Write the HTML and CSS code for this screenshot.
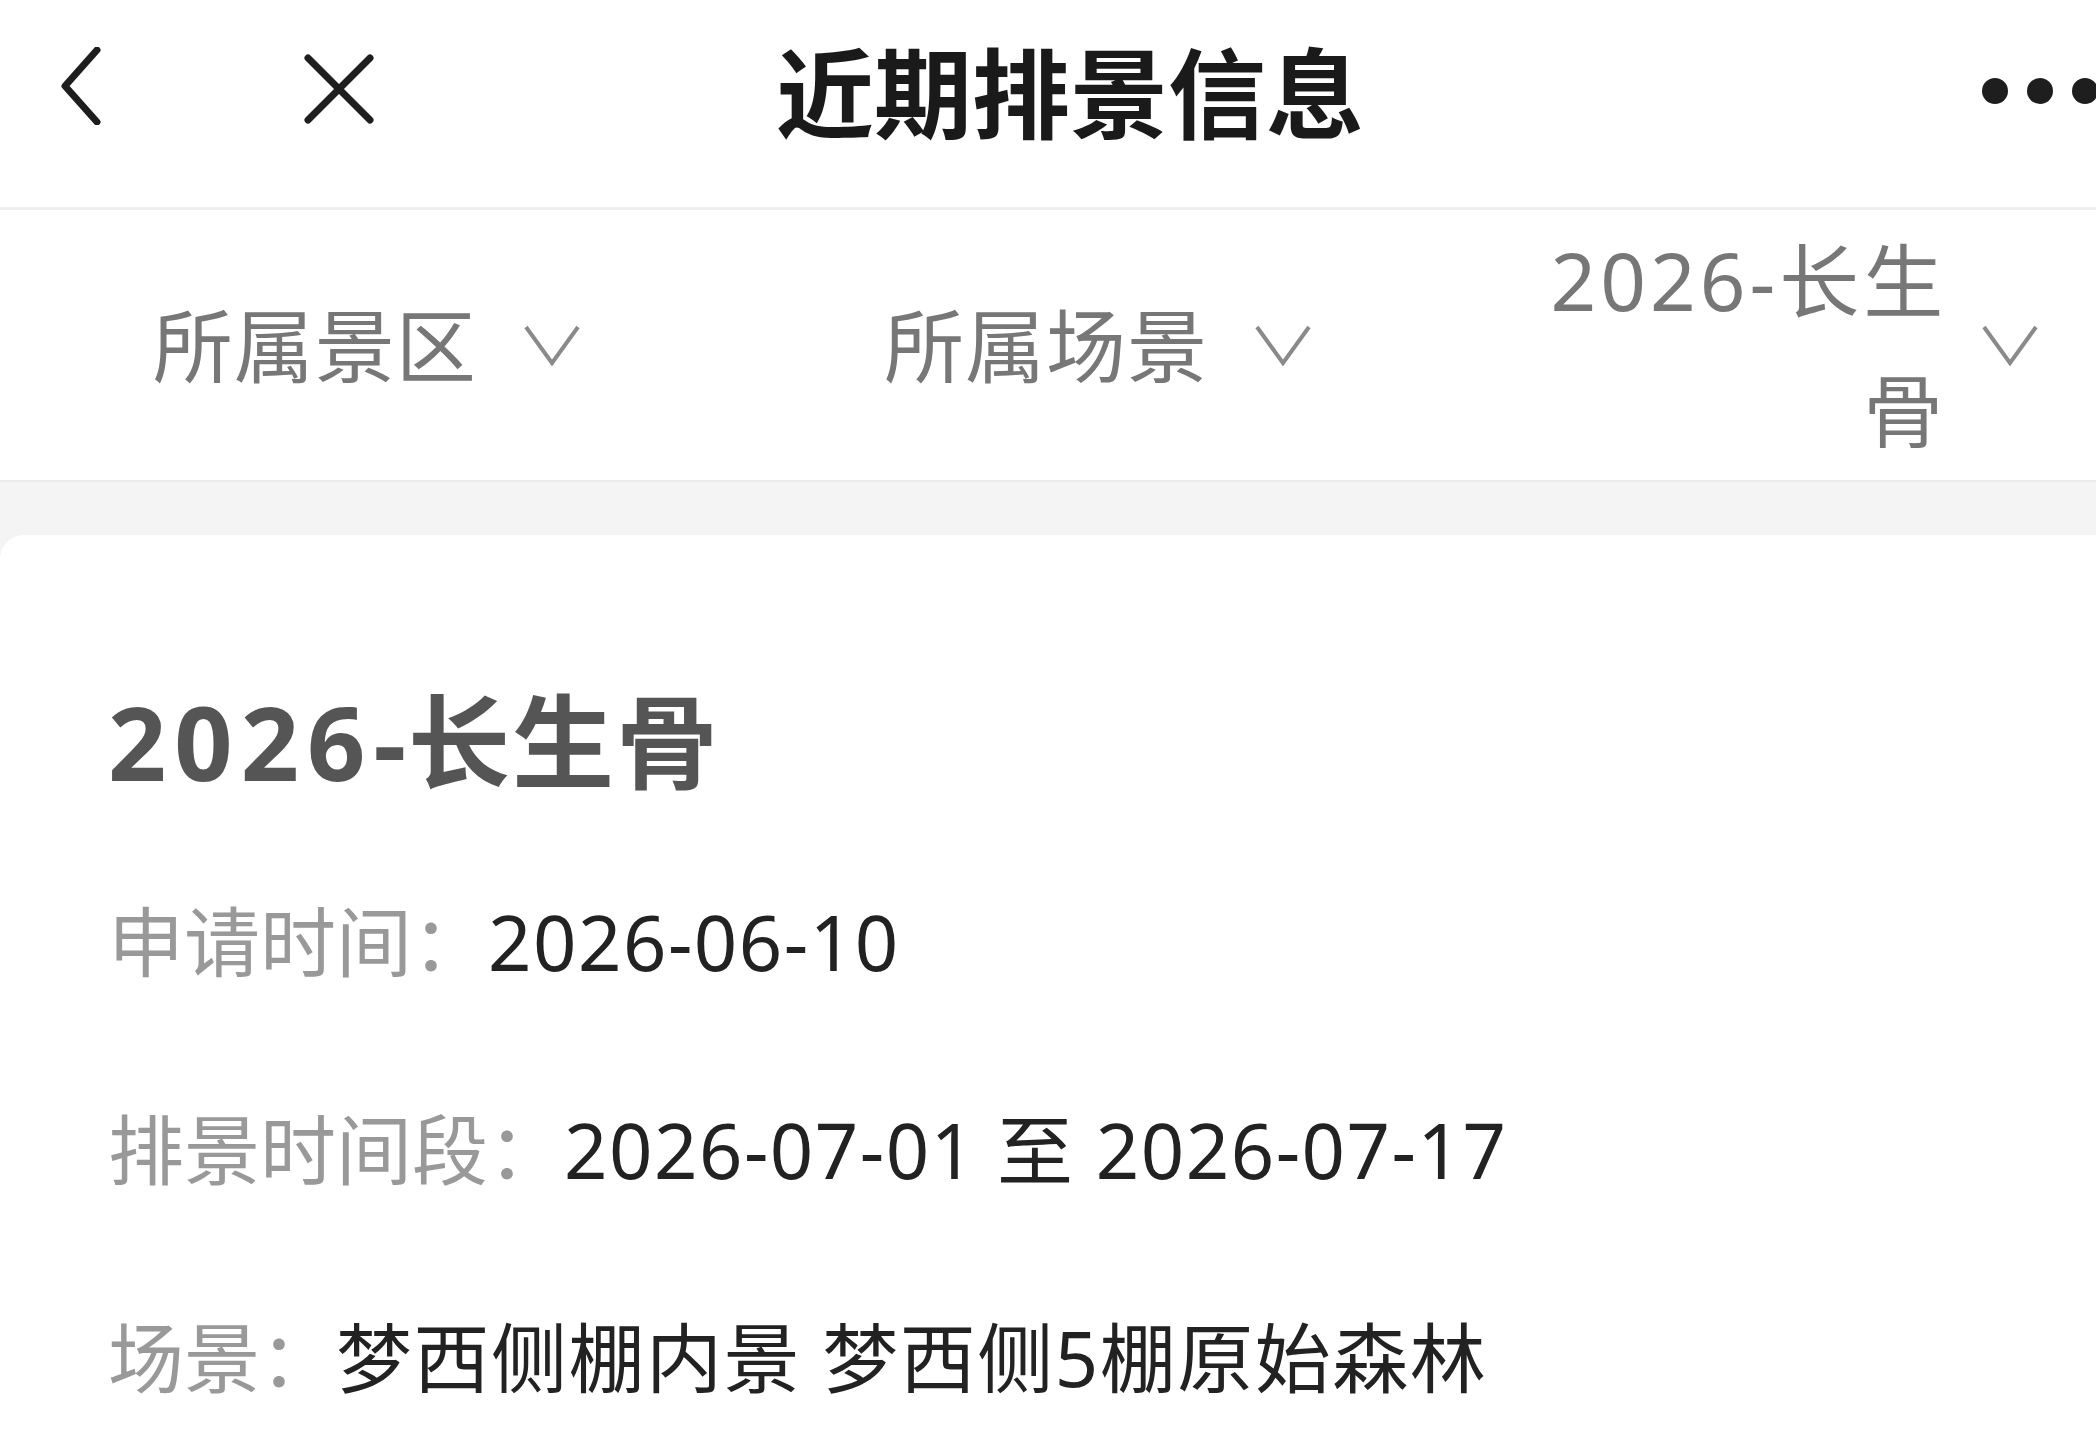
FILE: index.html
```html
<!DOCTYPE html>
<html lang="zh-CN">
<head>
    <meta charset="UTF-8">
    <meta name="viewport" content="width=device-width, initial-scale=1.0">
    <title>近期排景信息</title>
    <link rel="stylesheet" href="styles.css">
</head>
<body>
    <div class="page">
        <div class="nav-bar">
            <div class="nav-left">
                <svg class="icon-back" width="40" height="78" viewBox="0 0 40 78">
                    <polyline points="36,3 4,39 36,75" fill="none" stroke="#1e1e1e" stroke-width="7" stroke-linecap="round" stroke-linejoin="round"/>
                </svg>
                <svg class="icon-close" width="70" height="70" viewBox="0 0 70 70">
                    <line x1="4" y1="4" x2="66" y2="66" stroke="#1e1e1e" stroke-width="7" stroke-linecap="round"/>
                    <line x1="66" y1="4" x2="4" y2="66" stroke="#1e1e1e" stroke-width="7" stroke-linecap="round"/>
                </svg>
            </div>
            <h1 class="nav-title">近期排景信息</h1>
            <div class="nav-right">
                <svg width="116" height="26" viewBox="0 0 116 26">
                    <circle cx="13" cy="13" r="13" fill="#1e1e1e"/>
                    <circle cx="58" cy="13" r="13" fill="#1e1e1e"/>
                    <circle cx="103" cy="13" r="13" fill="#1e1e1e"/>
                </svg>
            </div>
        </div>

        <div class="filter-bar">
            <div class="filter-item area">
                <span class="filter-text">所属景区</span>
                <svg class="arrow" width="58" height="42" viewBox="0 0 58 42">
                    <polyline points="3,3 29,39 55,3" fill="none" stroke="#8a8a8a" stroke-width="4"/>
                </svg>
            </div>
            <div class="filter-item scene">
                <span class="filter-text">所属场景</span>
                <svg class="arrow" width="58" height="42" viewBox="0 0 58 42">
                    <polyline points="3,3 29,39 55,3" fill="none" stroke="#8a8a8a" stroke-width="4"/>
                </svg>
            </div>
            <div class="filter-item project">
                <span class="filter-text wrap">2026-长生骨</span>
                <svg class="arrow" width="58" height="42" viewBox="0 0 58 42">
                    <polyline points="3,3 29,39 55,3" fill="none" stroke="#8a8a8a" stroke-width="4"/>
                </svg>
            </div>
        </div>

        <div class="content">
            <div class="card">
                <div class="card-title"><span class="num">2026</span>-长生骨</div>
                <div class="info-row">
                    <span class="label">申请时间：</span><span class="value">2026-06-10</span>
                </div>
                <div class="info-row">
                    <span class="label">排景时间段：</span><span class="value">2026-07-01 至 2026-07-17</span>
                </div>
                <div class="info-row">
                    <span class="label">场景：</span><span class="value">梦西侧棚内景 梦西侧5棚原始森林</span>
                </div>
            </div>
        </div>
    </div>
</body>
</html>
```

FILE: styles.css
```css
html, body {
    margin: 0;
    padding: 0;
    background: #fff;
    overflow: hidden;
}
body {
    font-family: "Noto Sans", "Noto Sans CJK SC", sans-serif;
}
.page {
    width: 2140px;
}

/* top bar */
.nav-bar {
    display: grid;
    grid-template-columns: 1fr auto 1fr;
    align-items: center;
    height: 177px;
    padding-bottom: 30px;
    border-bottom: 3px solid #efefef;
}
.nav-left {
    display: flex;
    align-items: center;
    padding-left: 61px;
    gap: 203px;
}
.icon-back {
    margin-top: -6px;
}
.nav-title {
    margin: 0;
    font-size: 98px;
    font-weight: 700;
    color: #1a1a1a;
    font-family: "Noto Sans CJK SC", sans-serif;
    line-height: 1.2;
}
.nav-right {
    display: flex;
    justify-content: flex-end;
    padding-right: 42px;
    padding-top: 4px;
}

/* filters */
.filter-bar {
    display: grid;
    grid-template-columns: repeat(3, 1fr);
    min-height: 270px;
    border-bottom: 2px solid #ebebeb;
}
.filter-item {
    display: flex;
    align-items: center;
    justify-content: center;
    gap: 46px;
    padding-left: 20px;
}
.filter-item.scene {
    padding-left: 56px;
}
.filter-item.project {
    padding-left: 0;
    padding-right: 10px;
    gap: 34px;
}
.filter-text {
    font-size: 80px;
    color: #777;
    line-height: 130px;
    letter-spacing: 1px;
}
.filter-text.wrap {
    max-width: 430px;
    text-align: right;
    letter-spacing: 4px;
}
.arrow {
    flex-shrink: 0;
}

/* card */
.content {
    background: #f4f4f4;
    padding-top: 53px;
}
.card {
    background: #fff;
    border-radius: 24px 24px 0 0;
    padding: 147px 0 60px 108px;
    min-height: 800px;
}
.card-title {
    font-size: 102px;
    font-weight: 700;
    color: #555;
    line-height: 120px;
    letter-spacing: 2px;
    margin-bottom: 90px;
}
.card-title .num {
    letter-spacing: 8px;
}
.info-row {
    font-size: 76px;
    line-height: 100px;
    margin-bottom: 108px;
    white-space: nowrap;
}
.label {
    color: #999;
}
.value {
    color: #222;
    letter-spacing: 1.5px;
}
```
